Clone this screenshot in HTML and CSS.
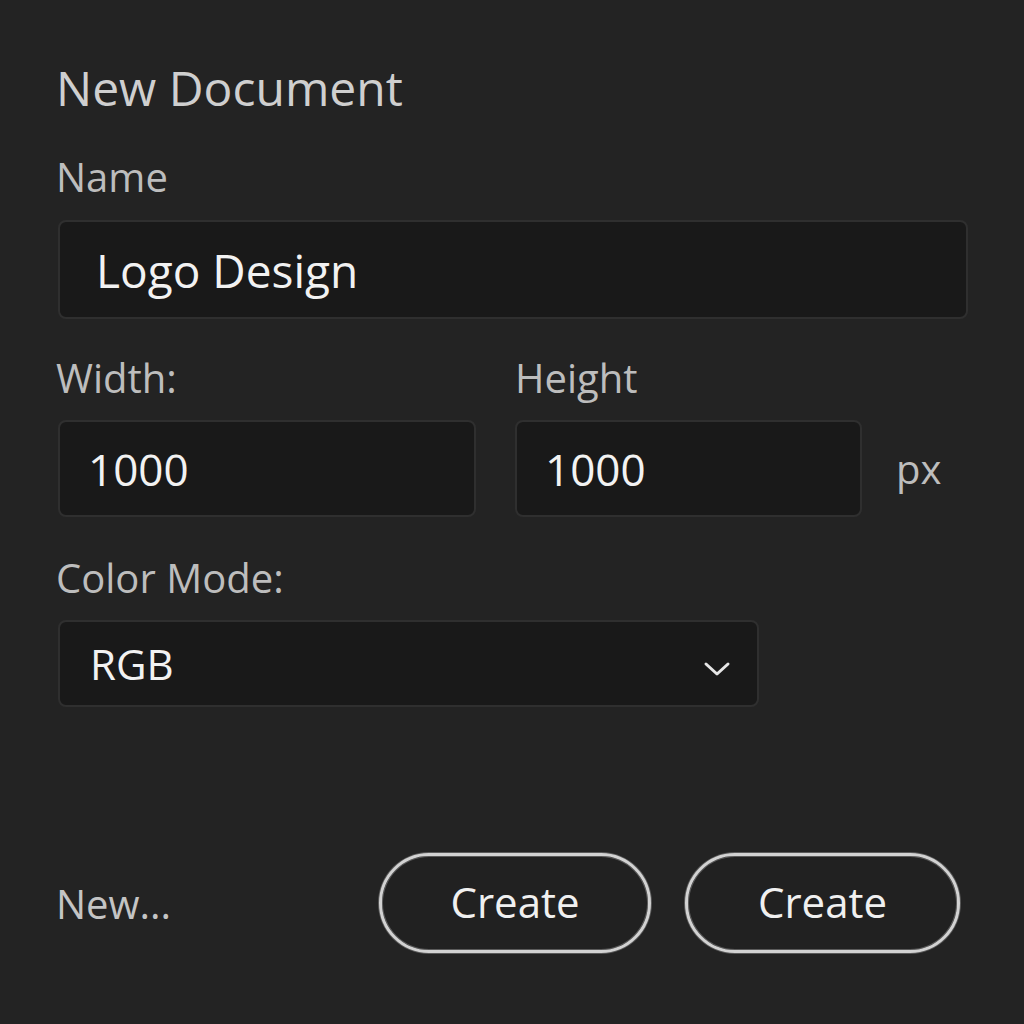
FILE: index.html
```html
<!DOCTYPE html>
<html>
<head>
<meta charset="utf-8">
<link rel="stylesheet" href="styles.css">
</head>
<body>
<div class="dialog">
  <h1 class="title">New Document</h1>
  <div class="label label-name">Name</div>
  <div class="field field-name"><span class="value value-name">Logo Design</span></div>

  <div class="dims">
    <div class="dim dim-w">
      <div class="label">Width:</div>
      <div class="field field-num"><span class="value value-num">1000</span></div>
    </div>
    <div class="dim dim-h">
      <div class="label">Height</div>
      <div class="field field-num"><span class="value value-num">1000</span></div>
    </div>
    <div class="unit">px</div>
  </div>

  <div class="label label-mode">Color Mode:</div>
  <div class="field field-select">
    <span class="value value-select">RGB</span>
    <svg class="chevron" width="28" height="16" viewBox="0 0 28 16"><path d="M3 3 L14 13 L25 3" fill="none" stroke="#e6e6e6" stroke-width="3" stroke-linecap="round" stroke-linejoin="round"/></svg>
  </div>

  <div class="footer">
    <div class="new">New...</div>
    <div class="buttons">
      <button class="btn btn-1">Create</button>
      <button class="btn btn-2">Create</button>
    </div>
  </div>
</div>
</body>
</html>
```
FILE: styles.css
```css
html, body {
  margin: 0;
  padding: 0;
  background: #232323;
}
body {
  width: 1024px;
  height: 1024px;
  font-family: "Open Sans", "Noto Sans", sans-serif;
  overflow: hidden;
}
.dialog {
  padding: 58px 56px 0 56px;
  display: flex;
  flex-direction: column;
}
.title {
  margin: 0;
  font-weight: 400;
  font-size: 48px;
  line-height: 60px;
  color: #cfcfcf;
}
.label {
  font-size: 40px;
  line-height: 46px;
  color: #bdbdbd;
}
.label-name { margin-top: 36px; }
.field {
  box-sizing: border-box;
  background: #191919;
  border: 2px solid #2f2f2f;
  border-radius: 8px;
  display: flex;
  align-items: center;
}
.field-name {
  margin-top: 20px;
  margin-left: 2px;
  width: 910px;
  height: 99px;
  padding-left: 36px;
}
.value { color: #f2f2f2; }
.value-name { font-size: 46px; }
.dims {
  margin-top: 36px;
  display: flex;
  align-items: flex-end;
}
.dim { display: flex; flex-direction: column; }
.dim .field { margin-top: 19px; }
.dim-w { width: 420px; }
.dim-h { width: 347px; margin-left: 39px; }
.dim-w .field { margin-left: 2px; width: 418px; }
.field-num { height: 97px; padding-left: 28px; }
.value-num { font-size: 44px; }
.unit {
  margin-left: 34px;
  font-size: 40px;
  line-height: 97px;
  color: #bdbdbd;
}
.label-mode { margin-top: 38px; }
.field-select {
  margin-top: 19px;
  margin-left: 2px;
  width: 701px;
  height: 87px;
  padding: 0 26px 0 30px;
  justify-content: space-between;
}
.value-select { font-size: 42px; }
.chevron { display: block; margin-top: 10px; }
.footer {
  margin-top: 146px;
  display: flex;
  align-items: center;
  justify-content: space-between;
}
.new {
  font-size: 40px;
  color: #c4c4c4;
}
.buttons { display: flex; gap: 34px; margin-right: 8px; }
.btn {
  box-sizing: border-box;
  height: 100px;
  border-radius: 50px;
  background: #212121;
  border: 3px solid #d2d2d2;
  box-shadow: inset 0 0 0 1px #5a5a5a, 0 0 0 1px #5a5a5a;
  color: #f0f0f0;
  font-family: "Open Sans", "Noto Sans", sans-serif;
  font-size: 42px;
  line-height: 1;
  padding: 0 0 2px 0;
}
.btn-1 { width: 272px; }
.btn-2 { width: 275px; }
```
